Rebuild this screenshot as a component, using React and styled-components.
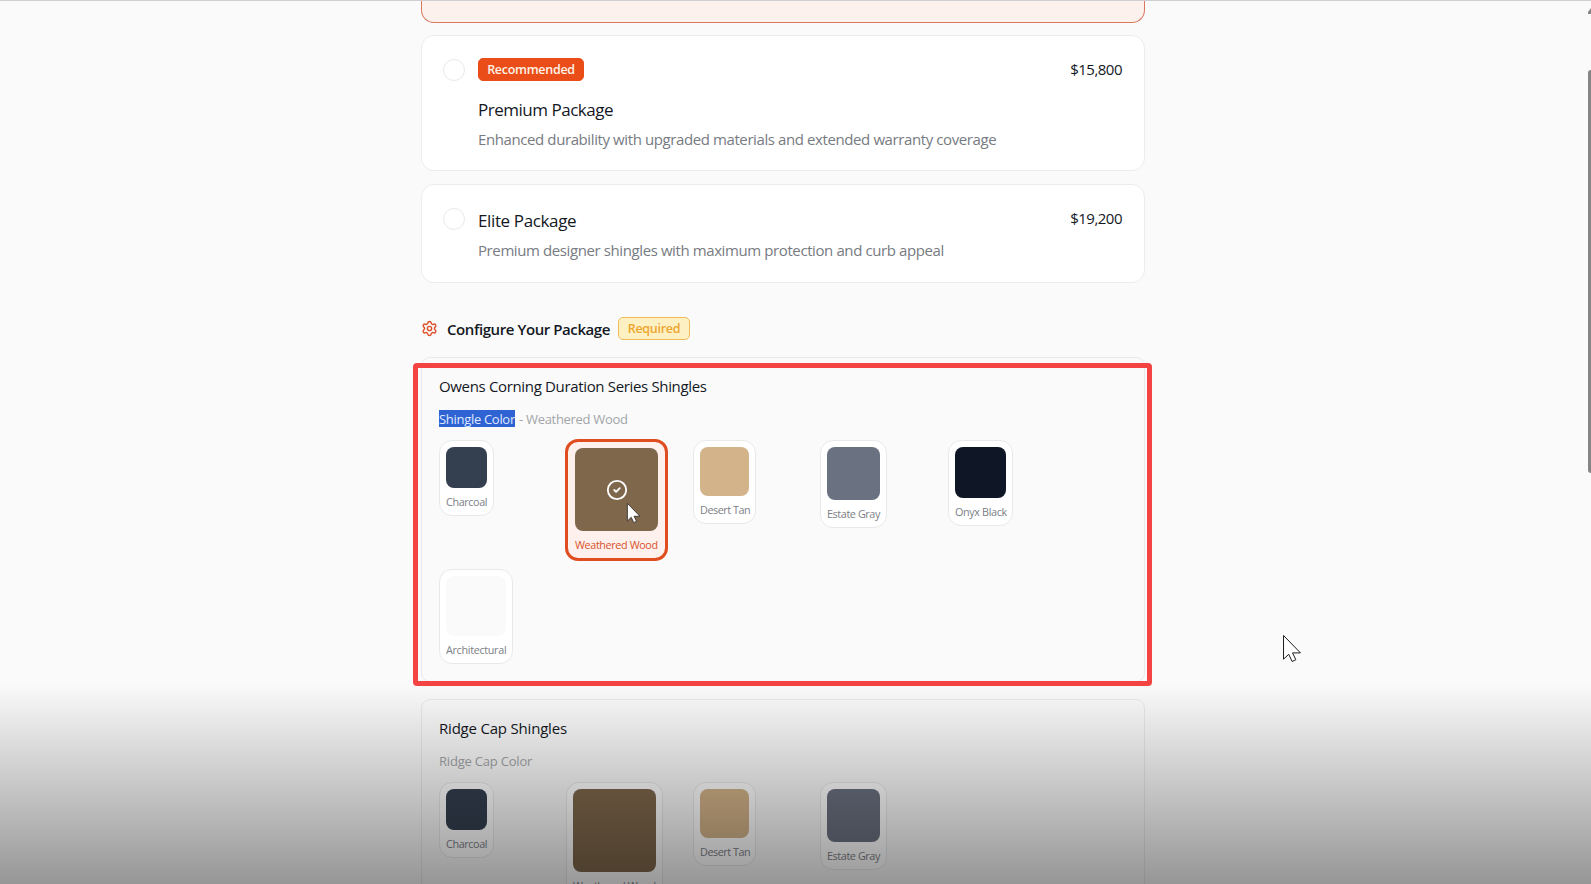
import React from "react";
import styled, { createGlobalStyle, css } from "styled-components";
import { Settings, CircleCheck } from "lucide-react";

const GlobalStyle = createGlobalStyle`
    * {
        box-sizing: border-box;
    }

    body {
        margin: 0;
        background-color: #fafafa;
        font-family: "Open Sans", "Noto Sans", sans-serif;
        overflow: hidden;
    }
`;

const Page = styled.div`
    position: relative;
    height: 884px;
    overflow: hidden;
    border-top: 1px solid #cfcfd1;
    background-color: #fafafa;
    color: #14181f;
`;

const Column = styled.main`
    width: 724px;
    margin-left: 421px;
`;

const SelectedPackage = styled.div`
    height: 22px;
    margin-bottom: 12px;
    border: 1px solid #d9785f;
    border-top: none;
    border-radius: 0 0 13px 13px;
    background-color: #fdf1ee;
`;

const PackageCard = styled.section`
    display: flex;
    align-items: flex-start;
    height: ${(props) => props.$height}px;
    margin-bottom: 13px;
    padding: 22px 21px 0;
    border: 1px solid #ececee;
    border-radius: 13px;
    background-color: white;
`;

const Radio = styled.span`
    flex: none;
    width: 22px;
    height: 22px;
    margin: 1px 13px 0 0;
    border: 1px solid #e9e9eb;
    border-radius: 50%;
    background-color: white;
`;

const PackageInfo = styled.div`
    flex: 1;
`;

const Text = styled.span`
    display: block;
    white-space: nowrap;
    font-size: ${(props) => props.$size}px;
    letter-spacing: ${(props) => props.$spacing || 0}px;
`;

const PackageName = styled(Text)`
    margin-top: 1px;
    line-height: 26px;
`;

const PackageText = styled(Text)`
    margin-top: 4px;
    line-height: 24px;
    color: #777b82;
`;

const Price = styled(Text)`
    margin: 1px 1px 0 0;
    line-height: 20px;
`;

const Badge = styled.span`
    display: flex;
    align-items: center;
    justify-content: center;
    width: ${(props) => props.$width}px;
    height: 23px;
    padding-top: ${(props) => (props.$warning ? 2 : 0)}px;
    border: 1px solid ${(props) => (props.$warning ? "#f0bd55" : "#ea4d18")};
    border-radius: 5px;
    background-color: ${(props) => (props.$warning ? "#fdf0c3" : "#ea4d18")};
    color: ${(props) => (props.$warning ? "#eda62e" : "#fff3e6")};
    font-size: 12.5px;
    font-weight: 600;
    line-height: 20px;
    letter-spacing: -0.28px;
`;

const RecommendedBadge = styled(Badge)`
    margin-bottom: 16px;
`;

const ConfigureRow = styled.div`
    display: flex;
    align-items: center;
    height: 24px;
    margin: 33px 0 17px;

    svg {
        color: #dc4f2a;
    }
`;

const ConfigureTitle = styled(Text)`
    width: 171px;
    margin: 2px 0 0 9px;
    font-weight: 600;
    line-height: 22px;
`;

const Panel = styled.section`
    height: 325px;
    margin-bottom: 17px;
    padding: 17px 17px 0;
    border: 1px solid #e8e9eb;
    border-radius: 9px;
`;

const PanelTitle = styled(Text)`
    line-height: 22px;
`;

const PanelLabel = styled(Text)`
    height: 18px;
    margin: 13px 0 12px;
    line-height: 18px;
    color: #a3a5a9;
`;

const Highlighted = styled.span`
    display: inline-block;
    height: 17px;
    margin-right: 1px;
    line-height: 18px;
    background-color: #2f62d3;
    color: #dfe9ff;
`;

const SwatchGrid = styled.div`
    display: grid;
    grid-template-columns: 127px 127px 127px 128px 127px;
    grid-template-rows: 121px auto;
    row-gap: 8px;
    align-items: start;
    justify-items: start;
`;

const SwatchCard = styled.div`
    padding: 6px;
    border: 1px solid #e8e9eb;
    border-radius: 13px;
    background-color: white;
    color: #7c8086;

    ${(props) =>
        props.$active &&
        css`
            margin: -1px 0 0 -1px;
            padding: 6px 7px 6px 7px;
            border: 3px solid #e04d20;
            background-color: #fdf0ed;
            color: #d9532c;
        `}
`;

const Swatch = styled.div`
    display: flex;
    align-items: center;
    justify-content: center;
    width: ${(props) => props.$size}px;
    height: ${(props) => props.$size}px;
    border-radius: 8px;
    background-color: ${(props) => props.$color};
    color: white;
`;

const SwatchName = styled(Text)`
    width: 0;
    min-width: 100%;
    margin-top: 6px;
    line-height: 15px;
`;

const HighlightFrame = styled.div`
    position: absolute;
    top: 362px;
    left: 413px;
    width: 739px;
    height: 323px;
    border: 5px solid #f44343;
    border-radius: 4px;
`;

const Shade = styled.div`
    position: absolute;
    right: 0;
    bottom: 0;
    left: 0;
    height: 200px;
    background: linear-gradient(rgba(0, 0, 0, 0), rgba(0, 0, 0, 0.4));
`;

const Pointer = styled.svg`
    position: absolute;
    top: ${(props) => props.$y}px;
    left: ${(props) => props.$x}px;
    overflow: visible;
`;

const ScrollThumb = styled.div`
    position: absolute;
    top: 69px;
    right: 0;
    width: 3px;
    height: 403px;
    border-radius: 3px 0 0 3px;
    background-color: #858585;
`;

const ScrollArrow = styled.svg`
    position: absolute;
    top: 6px;
    right: 0;
`;

const colors = [
    { name: "Charcoal", color: "#343f50", size: 41, spacing: -0.38 },
    { name: "Weathered Wood", color: "#7e674b", size: 83, spacing: -0.38 },
    { name: "Desert Tan", color: "#d3b389", size: 49.4, spacing: -0.45 },
    { name: "Estate Gray", color: "#6a7180", size: 52.6, spacing: -0.4 },
    { name: "Onyx Black", color: "#0f1626", size: 51.4, spacing: -0.36 },
    { name: "Architectural", color: "#fafafa", size: 60, spacing: -0.32 },
];

function Arrow({ x, y, height }) {
    return <Pointer $x={x} $y={y} width={height * 0.67} height={height} viewBox="0 0 18 27">
        <path d="M.5.5v23.7l5.2-4.9 3.4 7.2 3.7-1.8-3.3-6.8h7.9z" fill="white" stroke="#1c1c1c" strokeWidth="1" />
    </Pointer>
}

function Swatches({ items, active }) {
    return <SwatchGrid>
        {items.map((item) => (
            <SwatchCard key={item.name} $active={item.name === active}>
                <Swatch $size={item.size} $color={item.color}>
                    {item.name === active && <CircleCheck size={22} strokeWidth={2} />}
                </Swatch>
                <SwatchName $size={10.8} $spacing={item.spacing}>{item.name}</SwatchName>
            </SwatchCard>
        ))}
    </SwatchGrid>
}

function App() {
    return <Page>
        <GlobalStyle />
        <Column>
            <SelectedPackage />
            <PackageCard $height={136}>
                <Radio />
                <PackageInfo>
                    <RecommendedBadge $width={106}>Recommended</RecommendedBadge>
                    <PackageName $size={17} $spacing={-0.48}>Premium Package</PackageName>
                    <PackageText $size={15} $spacing={-0.4}>Enhanced durability with upgraded materials and extended warranty coverage</PackageText>
                </PackageInfo>
                <Price $size={15} $spacing={-0.5}>$15,800</Price>
            </PackageCard>
            <PackageCard $height={99}>
                <Radio />
                <PackageInfo>
                    <PackageName $size={17} $spacing={-0.37}>Elite Package</PackageName>
                    <PackageText $size={15} $spacing={-0.4}>Premium designer shingles with maximum protection and curb appeal</PackageText>
                </PackageInfo>
                <Price $size={15} $spacing={-0.5}>$19,200</Price>
            </PackageCard>
            <ConfigureRow>
                <Settings size={17} strokeWidth={2} />
                <ConfigureTitle $size={15} $spacing={-0.42}>Configure Your Package</ConfigureTitle>
                <Badge $width={72} $warning>Required</Badge>
            </ConfigureRow>
            <Panel>
                <PanelTitle $size={15} $spacing={-0.34}>Owens Corning Duration Series Shingles</PanelTitle>
                <PanelLabel $size={13} $spacing={-0.3}><Highlighted>Shingle Color</Highlighted> - Weathered Wood</PanelLabel>
                <Swatches items={colors} active="Weathered Wood" />
            </Panel>
            <Panel>
                <PanelTitle $size={15} $spacing={-0.2}>Ridge Cap Shingles</PanelTitle>
                <PanelLabel $size={13} $spacing={-0.2}>Ridge Cap Color</PanelLabel>
                <Swatches items={colors.slice(0, 4)} />
            </Panel>
        </Column>
        <HighlightFrame />
        <Shade />
        <Arrow x={627} y={502} height={20} />
        <Arrow x={1283} y={634} height={27} />
        <ScrollArrow width="3" height="7" viewBox="0 0 3 7">
            <path d="M3 1v6H0V5z" fill="#858585" />
        </ScrollArrow>
        <ScrollThumb />
    </Page>
}

export default App;
